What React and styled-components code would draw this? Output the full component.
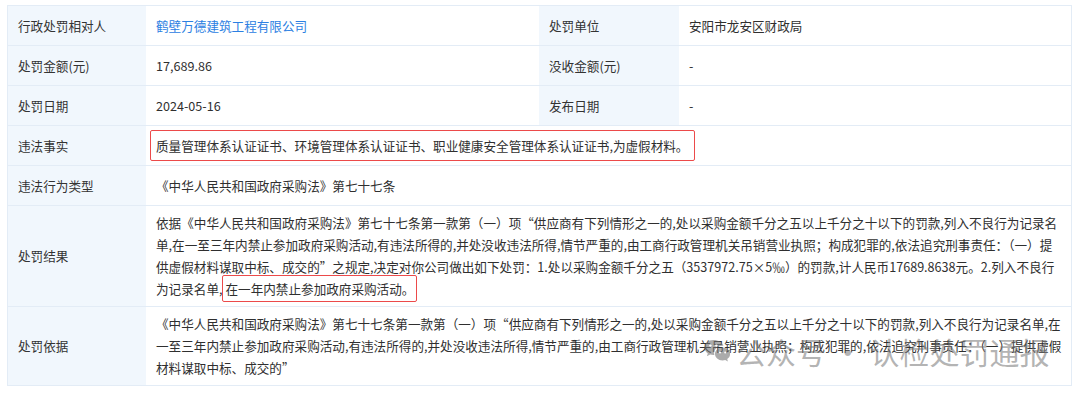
import React from "react";
import styled, { createGlobalStyle } from "styled-components";

const GlobalStyle = createGlobalStyle`
  html, body { margin: 0; padding: 0; background: #ffffff; }
  body {
    font-family: "Noto Sans CJK SC", "Noto Sans", "Liberation Sans", sans-serif;
    color: #2f2f2f;
  }
`;

const Page = styled.div`
  position: relative;
  width: 1080px;
  height: 394px;
  box-sizing: border-box;
  padding: 5px 8px 0 7px;
  overflow: hidden;
`;

const Table = styled.div`
  display: grid;
  grid-template-columns: 138px 393px 140px 1fr;
  border: 1px solid #e3ecf6;
  border-bottom: none;
  font-size: 12.6px;
  line-height: 22px;
`;

const Label = styled.div`
  display: flex;
  align-items: center;
  min-height: 40px;
  box-sizing: border-box;
  padding: 0 10px;
  background: #f1f7fd;
  color: #333333;
  border-bottom: 1px solid #e3ecf6;
  white-space: nowrap;
`;

const Value = styled.div`
  display: flex;
  align-items: center;
  min-height: 40px;
  box-sizing: border-box;
  padding: ${(p) => (p.$multi ? "6px 10px" : "0 10px")};
  grid-column: ${(p) => (p.$wide ? "span 3" : "auto")};
  color: ${(p) => (p.$link ? "#2c80e2" : "#2f2f2f")};
  border-bottom: 1px solid #e3ecf6;
  background: #ffffff;
`;

const Lines = styled.div`
  display: flex;
  flex-direction: column;
`;

const Line = styled.span`
  display: block;
  white-space: nowrap;
`;

const Marked = styled.span`
  border: 1px solid #ec4a4a;
  border-radius: 2px;
  padding: ${(p) => (p.$tall ? "5px 6px 5px 5px" : "3px 2px")};
  margin-left: ${(p) => (p.$tall ? "-6px" : "0")};
`;

const Watermark = styled.div`
  position: absolute;
  left: 703px;
  top: 334px;
  display: flex;
  align-items: center;
  gap: 5px;
  color: rgba(115, 115, 115, 0.55);
  font-size: 30px;
  line-height: 34px;
  white-space: nowrap;
  pointer-events: none;
`;

const WeChatIcon = () => (
  <svg width="28" height="28" viewBox="0 0 28 28" aria-hidden="true">
    <g fill="rgba(115,115,115,0.6)">
      <path d="M10.5 3C5.3 3 1.5 6.4 1.5 10.6c0 2.4 1.3 4.5 3.3 5.9l-.9 2.8 3.3-1.7c1.1.3 2.1.5 3.3.5.3 0 .6 0 .9 0-.2-.7-.3-1.3-.3-2 0-4.1 3.8-7.4 8.6-7.4h.7C19.4 5.4 15.4 3 10.5 3z" />
      <path d="M19.6 10.6c-4.3 0-7.6 2.9-7.6 6.4s3.3 6.4 7.6 6.4c.9 0 1.8-.1 2.6-.4l2.7 1.5-.7-2.4c1.8-1.2 2.900-3 2.9-5.1 0-3.5-3.4-6.4-7.5-6.4z" />
    </g>
    <g fill="#ffffff">
      <circle cx="7.4" cy="8.6" r="1.2" />
      <circle cx="13.4" cy="8.6" r="1.2" />
      <circle cx="17" cy="15.6" r="1" />
      <circle cx="22.2" cy="15.6" r="1" />
    </g>
  </svg>
);

const resultLines = [
  "依据《中华人民共和国政府采购法》第七十七条第一款第（一）项“供应商有下列情形之一的,处以采购金额千分之五以上千分之十以下的罚款,列入不良行为记录名",
  "单,在一至三年内禁止参加政府采购活动,有违法所得的,并处没收违法所得,情节严重的,由工商行政管理机关吊销营业执照；构成犯罪的,依法追究刑事责任：（一）提",
  "供虚假材料谋取中标、成交的”之规定,决定对你公司做出如下处罚：1.处以采购金额千分之五（3537972.75×5‰）的罚款,计人民币17689.8638元。2.列入不良行",
];

const basisLines = [
  "《中华人民共和国政府采购法》第七十七条第一款第（一）项“供应商有下列情形之一的,处以采购金额千分之五以上千分之十以下的罚款,列入不良行为记录名单,在",
  "一至三年内禁止参加政府采购活动,有违法所得的,并处没收违法所得,情节严重的,由工商行政管理机关吊销营业执照；构成犯罪的,依法追究刑事责任：（一）提供虚假",
  "材料谋取中标、成交的”",
];

export default function App() {
  return (
    <>
      <GlobalStyle />
      <Page>
        <Table>
          <Label>行政处罚相对人</Label>
          <Value $link>鹤壁万德建筑工程有限公司</Value>
          <Label>处罚单位</Label>
          <Value>安阳市龙安区财政局</Value>

          <Label>处罚金额(元)</Label>
          <Value>17,689.86</Value>
          <Label>没收金额(元)</Label>
          <Value>-</Value>

          <Label>处罚日期</Label>
          <Value>2024-05-16</Value>
          <Label>发布日期</Label>
          <Value>-</Value>

          <Label>违法事实</Label>
          <Value $wide>
            <span>
              <Marked $tall>
                质量管理体系认证证书、环境管理体系认证证书、职业健康安全管理体系认证证书,为虚假材料。
              </Marked>
            </span>
          </Value>

          <Label>违法行为类型</Label>
          <Value $wide>《中华人民共和国政府采购法》第七十七条</Value>

          <Label>处罚结果</Label>
          <Value $wide $multi>
            <Lines>
              {resultLines.map((t) => (
                <Line key={t}>{t}</Line>
              ))}
              <Line>
                为记录名单,<Marked>在一年内禁止参加政府采购活动。</Marked>
              </Line>
            </Lines>
          </Value>

          <Label>处罚依据</Label>
          <Value $wide $multi>
            <Lines>
              {basisLines.map((t) => (
                <Line key={t}>{t}</Line>
              ))}
            </Lines>
          </Value>
        </Table>
        <Watermark>
          <WeChatIcon />
          <span>公众号 · 认检处罚通报</span>
        </Watermark>
      </Page>
    </>
  );
}
